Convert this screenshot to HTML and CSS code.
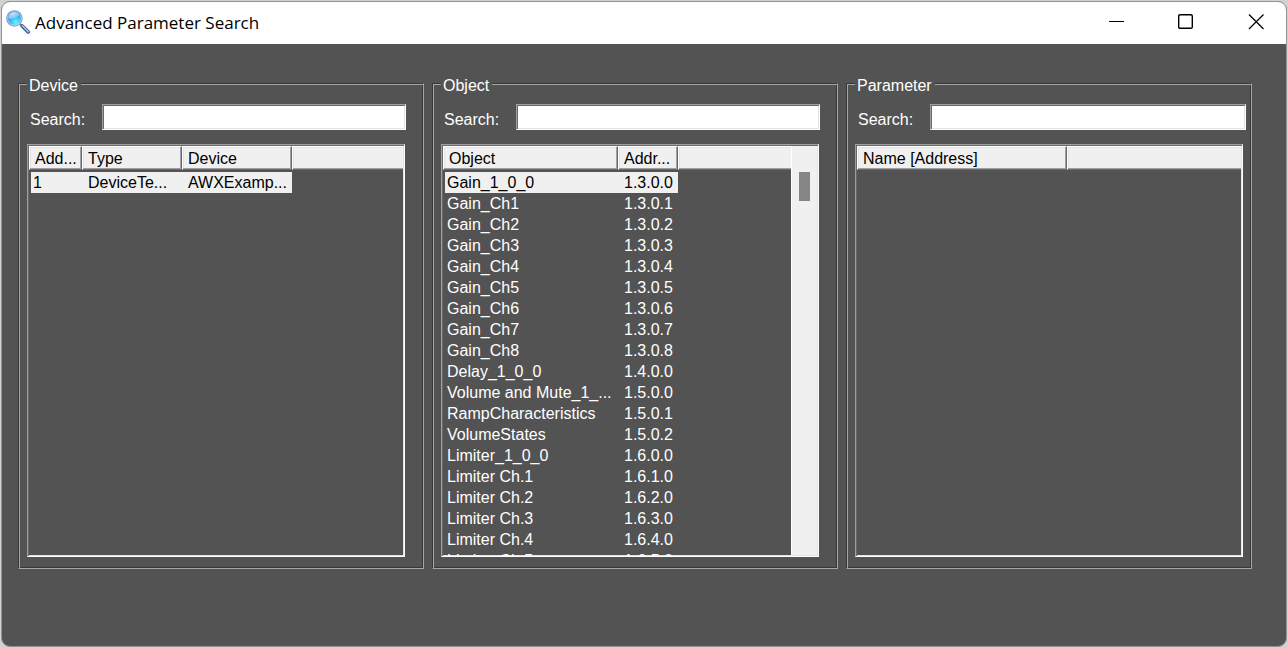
FILE: index.html
```html
<!DOCTYPE html>
<html lang="en">
<head>
<meta charset="utf-8">
<title>Advanced Parameter Search</title>
<link rel="stylesheet" href="styles.css">
</head>
<body>
<div class="window">
  <header class="titlebar">
    <svg class="app-icon" width="25" height="25" viewBox="0 0 25 25" aria-hidden="true">
      <defs>
        <radialGradient id="lens" cx="0.6" cy="0.75" r="0.8">
          <stop offset="0" stop-color="#6af6ff"/>
          <stop offset="0.5" stop-color="#35b0f2"/>
          <stop offset="1" stop-color="#2563d8"/>
        </radialGradient>
        <linearGradient id="shine" x1="0" y1="0" x2="0.6" y2="1">
          <stop offset="0" stop-color="#ffffff" stop-opacity="1"/>
          <stop offset="1" stop-color="#ffffff" stop-opacity="0.15"/>
        </linearGradient>
      </defs>
      <path d="M13 13L16 16" stroke="#6d7d96" stroke-width="2"/>
      <path d="M16.2 16L22.2 22" stroke="#43618f" stroke-width="3.8" stroke-linecap="round"/>
      <path d="M16.4 15.8L22.3 21.7" stroke="#a9c4e4" stroke-width="1.6" stroke-linecap="round"/>
      <circle cx="8.4" cy="8.4" r="7.7" fill="url(#lens)" stroke="#8da0c0" stroke-width="1.1"/>
      <circle cx="8.4" cy="8.4" r="6.8" fill="none" stroke="#c9e2fa" stroke-width="0.7"/>
      <path d="M2.6 9C2.2 4.8 5 2.2 8.4 2.2C10.8 2.2 12.6 3.4 13.2 5C11.4 8 7 8.6 2.6 9Z" fill="url(#shine)"/>
    </svg>
    <h1 class="title">Advanced Parameter Search</h1>
    <div class="caption-buttons">
      <button class="caption-button" type="button" aria-label="Minimize">
        <svg width="16" height="16" viewBox="0 0 16 16"><path d="M1 7.5H16" stroke="#000" fill="none"/></svg>
      </button>
      <button class="caption-button" type="button" aria-label="Maximize">
        <svg width="16" height="16" viewBox="0 0 16 16"><rect x="0.7" y="0.7" width="13.6" height="13.6" rx="1.4" stroke="#000" stroke-width="1.4" fill="none"/></svg>
      </button>
      <button class="caption-button" type="button" aria-label="Close">
        <svg width="16" height="16" viewBox="0 0 16 16"><path d="M1 0.5L15.5 15M15.5 0.5L1 15" stroke="#000" stroke-width="1.3" fill="none"/></svg>
      </button>
    </div>
  </header>

  <main class="panels">
    <fieldset class="group">
      <legend class="group-title">Device</legend>
      <div class="search">
        <label class="search-label" for="search-device">Search:</label>
        <input class="search-input" id="search-device" type="text">
      </div>
      <div class="list">
        <table class="grid">
          <colgroup><col class="col-add"><col class="col-type"><col class="col-device"><col></colgroup>
          <thead><tr><th>Add...</th><th>Type</th><th>Device</th><th></th></tr></thead>
          <tbody>
            <tr class="selected"><td>1</td><td>DeviceTe...</td><td>AWXExamp...</td></tr>
          </tbody>
        </table>
      </div>
    </fieldset>

    <fieldset class="group">
      <legend class="group-title">Object</legend>
      <div class="search">
        <label class="search-label" for="search-object">Search:</label>
        <input class="search-input" id="search-object" type="text">
      </div>
      <div class="list">
        <table class="grid">
          <colgroup><col class="col-object"><col class="col-addr"><col></colgroup>
          <thead><tr><th>Object</th><th>Addr...</th><th></th></tr></thead>
          <tbody>
            <tr class="selected"><td>Gain_1_0_0</td><td>1.3.0.0</td></tr>
            <tr><td>Gain_Ch1</td><td>1.3.0.1</td></tr>
            <tr><td>Gain_Ch2</td><td>1.3.0.2</td></tr>
            <tr><td>Gain_Ch3</td><td>1.3.0.3</td></tr>
            <tr><td>Gain_Ch4</td><td>1.3.0.4</td></tr>
            <tr><td>Gain_Ch5</td><td>1.3.0.5</td></tr>
            <tr><td>Gain_Ch6</td><td>1.3.0.6</td></tr>
            <tr><td>Gain_Ch7</td><td>1.3.0.7</td></tr>
            <tr><td>Gain_Ch8</td><td>1.3.0.8</td></tr>
            <tr><td>Delay_1_0_0</td><td>1.4.0.0</td></tr>
            <tr><td>Volume and Mute_1_...</td><td>1.5.0.0</td></tr>
            <tr><td>RampCharacteristics</td><td>1.5.0.1</td></tr>
            <tr><td>VolumeStates</td><td>1.5.0.2</td></tr>
            <tr><td>Limiter_1_0_0</td><td>1.6.0.0</td></tr>
            <tr><td>Limiter Ch.1</td><td>1.6.1.0</td></tr>
            <tr><td>Limiter Ch.2</td><td>1.6.2.0</td></tr>
            <tr><td>Limiter Ch.3</td><td>1.6.3.0</td></tr>
            <tr><td>Limiter Ch.4</td><td>1.6.4.0</td></tr>
            <tr><td>Limiter Ch.5</td><td>1.6.5.0</td></tr>
          </tbody>
        </table>
        <div class="scrollbar"><div class="thumb"></div></div>
      </div>
    </fieldset>

    <fieldset class="group group-wide">
      <legend class="group-title">Parameter</legend>
      <div class="search">
        <label class="search-label" for="search-parameter">Search:</label>
        <input class="search-input" id="search-parameter" type="text">
      </div>
      <div class="list">
        <table class="grid">
          <colgroup><col class="col-name"><col></colgroup>
          <thead><tr><th>Name [Address]</th><th></th></tr></thead>
        </table>
      </div>
    </fieldset>
  </main>
</div>
</body>
</html>
```
FILE: styles.css
```css
* {
  box-sizing: border-box;
}

body {
  margin: 0;
  height: 100vh;
  padding: 1px;
  background: #d2d2d2;
  font: 16px/20px "Liberation Sans", Arial, sans-serif;
}

.window {
  display: flex;
  flex-direction: column;
  height: 100%;
  overflow: hidden;
  border: 1px solid #949494;
  border-radius: 9px;
  background: #535353;
  color: #fff;
}

.titlebar {
  display: flex;
  align-items: center;
  flex: none;
  height: 42px;
  padding-left: 4px;
  background: #fff;
  color: #000;
}

.app-icon {
  margin-bottom: 1px;
}

.title {
  margin: 0 auto 0 4px;
  font: 17px/24px "Open Sans", "Segoe UI", sans-serif;
}

.caption-buttons {
  display: flex;
  gap: 10px;
  height: 100%;
}

.caption-button {
  display: flex;
  align-items: center;
  justify-content: center;
  width: 60px;
  padding: 0 0 2px;
  border: 0;
  background: none;
}

.panels {
  display: grid;
  grid-template-columns: repeat(3, minmax(0, 1fr));
  grid-template-rows: minmax(0, 1fr);
  gap: 8px;
  flex: 1;
  min-height: 0;
  padding: 27px 34px 77px 16px;
}

.group {
  display: flex;
  flex-direction: column;
  gap: 14px;
  min-width: 0;
  min-height: 0;
  margin: 0;
  padding: 9px 18px 11px 8px;
  border: 1px solid;
  border-color: #383838 #a6a6a6 #a6a6a6 #383838;
  box-shadow: inset 1px 1px #a6a6a6, inset -1px -1px #383838;
}

.group-wide {
  padding-right: 8px;
}

.group-title {
  padding: 6px 3px 0 2px;
  background: #535353;
  line-height: 18px;
}

.search {
  display: flex;
  align-items: center;
  flex: none;
  margin-right: -1px;
  padding-left: 3px;
}

.group-wide .search {
  margin-right: -3px;
}

.search-label {
  width: 72px;
  padding-top: 5px;
}

.search-input {
  flex: 1;
  min-width: 0;
  height: 26px;
  padding: 0 4px;
  border: 1px solid;
  border-color: #a0a0a0 #fff #fff #a0a0a0;
  border-radius: 0;
  box-shadow: inset 1px 1px #696969, inset -1px -1px #e3e3e3;
  outline: 0;
  background: #fff;
  font: inherit;
}

.list {
  display: flex;
  align-items: flex-start;
  flex: 1;
  min-height: 0;
  overflow: hidden;
  padding: 1px;
  border: 1px solid;
  border-color: #a0a0a0 #fff #fff #a0a0a0;
  box-shadow: inset 1px 1px #696969, inset -1px -1px #e3e3e3;
}

.grid {
  flex: 1;
  width: 100%;
  table-layout: fixed;
  border-spacing: 0;
}

.col-add { width: 53px; }
.col-type { width: 100px; }
.col-device { width: 110px; }
.col-object { width: 175px; }
.col-addr { width: 60px; }
.col-name { width: 210px; }

.grid th {
  height: 24px;
  padding: 1px 0 0 5px;
  border: 1px solid;
  border-color: #fff #696969 #696969 #fff;
  box-shadow: inset -1px -1px #a0a0a0, inset 1px 1px #e3e3e3;
  background: #f0f0f0;
  color: #000;
  font-weight: 400;
  line-height: 20px;
  text-align: left;
  white-space: nowrap;
}

.grid th:last-child {
  border-right: 0;
  box-shadow: inset 0 -1px #a0a0a0, inset 1px 1px #e3e3e3;
}

.grid td {
  height: 21px;
  padding: 0 0 0 6px;
  background-clip: padding-box;
  line-height: 21px;
  white-space: nowrap;
}

.grid td:first-child {
  padding-left: 2px;
  border-left: 2px solid transparent;
}

.grid tr:first-child td {
  border-top: 2px solid transparent;
}

.selected td {
  background-color: #f0f0f0;
  color: #000;
}

.scrollbar {
  align-self: stretch;
  flex: none;
  width: 26px;
  padding: 26px 7px 0;
  border-left: 1px solid #fff;
  background: #f0f0f0;
}

.thumb {
  width: 11px;
  height: 29px;
  background: #858585;
}
```
